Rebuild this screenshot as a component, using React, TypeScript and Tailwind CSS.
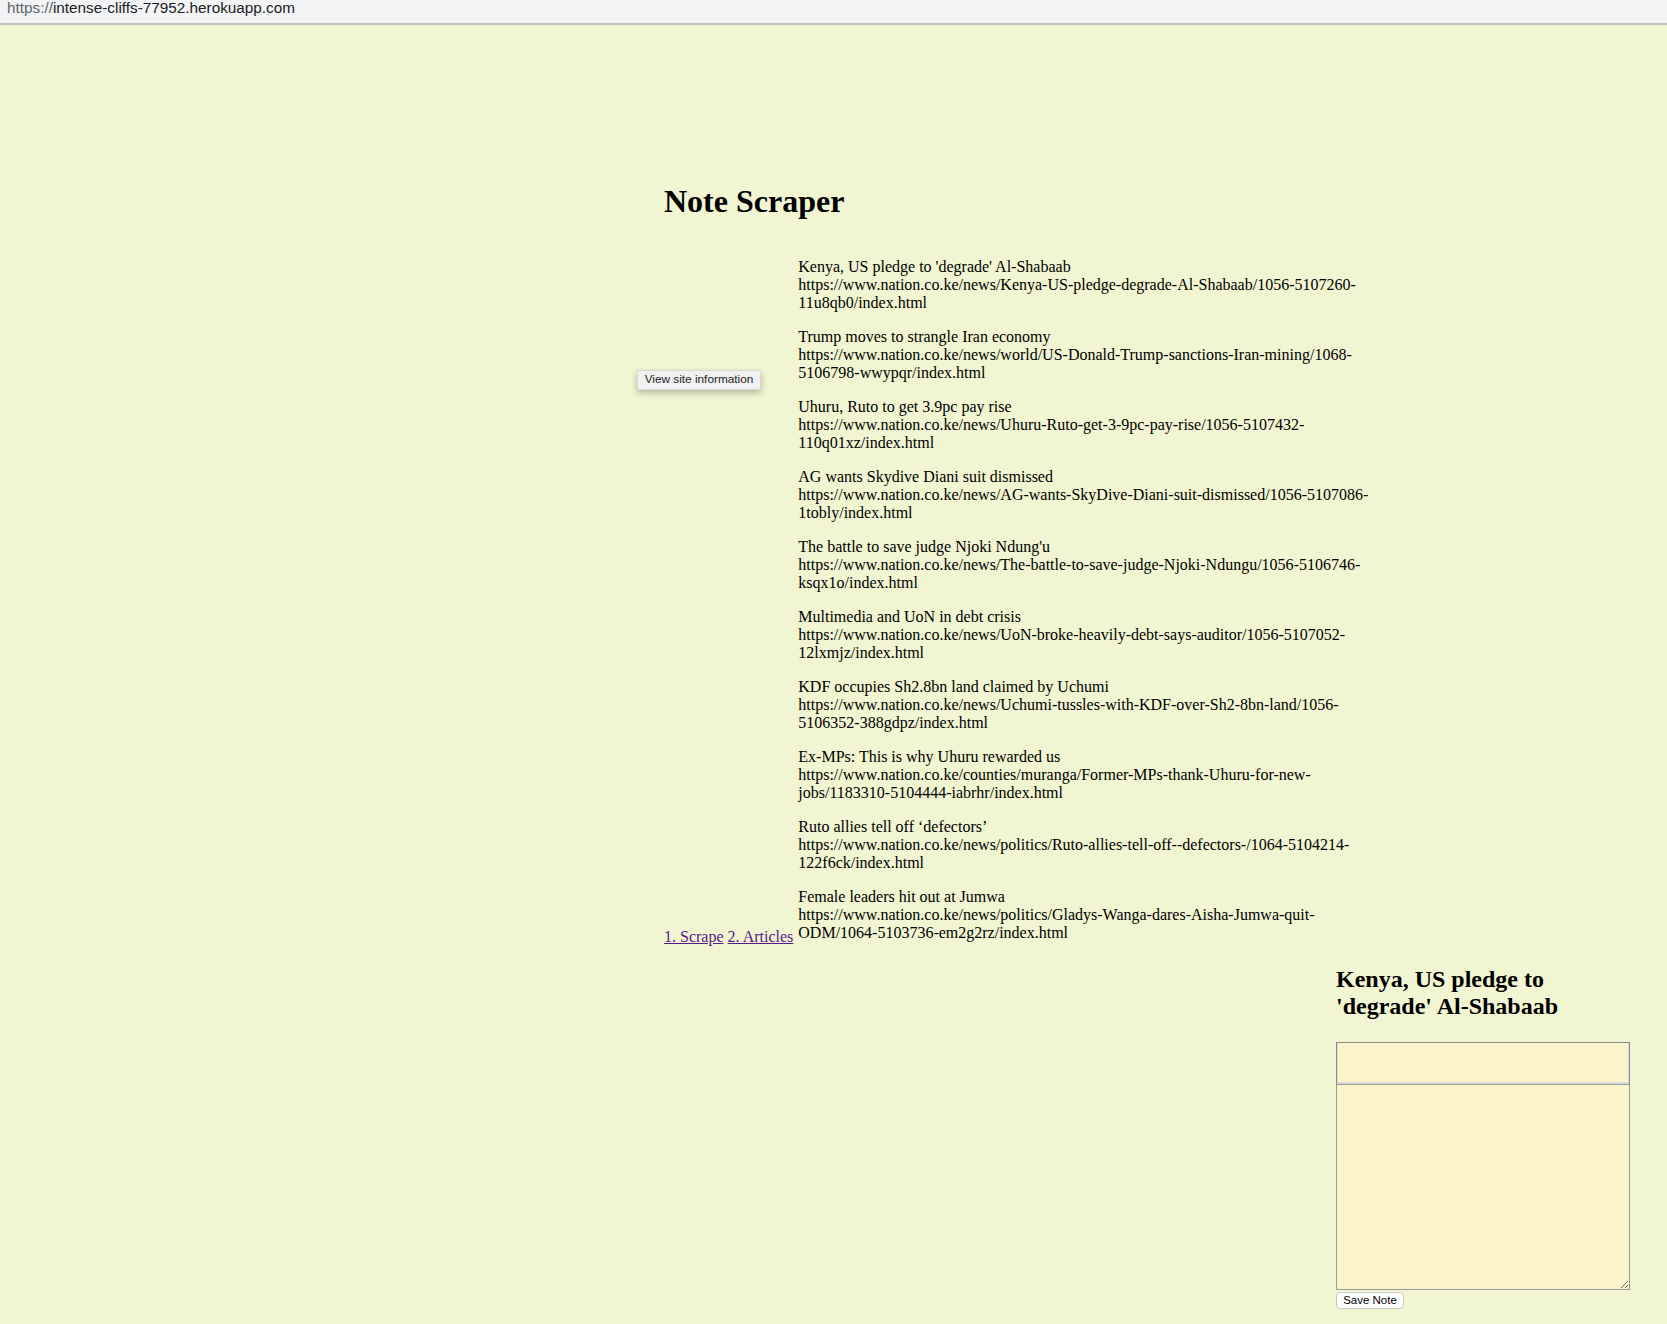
import React from 'react';

type Article = { title: string; url: string };

const articles: Article[] = [
  {
    title: "Kenya, US pledge to 'degrade' Al-Shabaab",
    url: 'https://www.nation.co.ke/news/Kenya-US-pledge-degrade-Al-Shabaab/1056-5107260-11u8qb0/index.html',
  },
  {
    title: 'Trump moves to strangle Iran economy',
    url: 'https://www.nation.co.ke/news/world/US-Donald-Trump-sanctions-Iran-mining/1068-5106798-wwypqr/index.html',
  },
  {
    title: 'Uhuru, Ruto to get 3.9pc pay rise',
    url: 'https://www.nation.co.ke/news/Uhuru-Ruto-get-3-9pc-pay-rise/1056-5107432-110q01xz/index.html',
  },
  {
    title: 'AG wants Skydive Diani suit dismissed',
    url: 'https://www.nation.co.ke/news/AG-wants-SkyDive-Diani-suit-dismissed/1056-5107086-1tobly/index.html',
  },
  {
    title: "The battle to save judge Njoki Ndung'u",
    url: 'https://www.nation.co.ke/news/The-battle-to-save-judge-Njoki-Ndungu/1056-5106746-ksqx1o/index.html',
  },
  {
    title: 'Multimedia and UoN in debt crisis',
    url: 'https://www.nation.co.ke/news/UoN-broke-heavily-debt-says-auditor/1056-5107052-12lxmjz/index.html',
  },
  {
    title: 'KDF occupies Sh2.8bn land claimed by Uchumi',
    url: 'https://www.nation.co.ke/news/Uchumi-tussles-with-KDF-over-Sh2-8bn-land/1056-5106352-388gdpz/index.html',
  },
  {
    title: 'Ex-MPs: This is why Uhuru rewarded us',
    url: 'https://www.nation.co.ke/counties/muranga/Former-MPs-thank-Uhuru-for-new-jobs/1183310-5104444-iabrhr/index.html',
  },
  {
    title: 'Ruto allies tell off \u2018defectors\u2019',
    url: 'https://www.nation.co.ke/news/politics/Ruto-allies-tell-off--defectors-/1064-5104214-122f6ck/index.html',
  },
  {
    title: 'Female leaders hit out at Jumwa',
    url: 'https://www.nation.co.ke/news/politics/Gladys-Wanga-dares-Aisha-Jumwa-quit-ODM/1064-5103736-em2g2rz/index.html',
  },
];

const App: React.FC = () => {
  return (
    <div className="relative min-h-screen bg-[#f2f5d2] text-black font-['Liberation_Serif','Times_New_Roman',serif]">
      {/* browser address strip */}
      <div className="h-[25px] bg-[#f1f3f4] border-b-2 border-[#bfbfbf] pl-[7px] font-['Liberation_Sans',Arial,sans-serif] text-[15.3px] leading-[15px]">
        <span className="text-[#5f6368]">https://</span>
        <span className="text-[#202124]">intense-cliffs-77952.herokuapp.com</span>
      </div>

      <div className="pl-[664px]">
        <h1 className="mt-[158px] text-[32px] font-bold leading-[37px]">Note Scraper</h1>

        <div className="mt-[38px] flex items-end gap-[5px]">
          <nav className="-mb-[4px] leading-[18px] text-[16px] whitespace-nowrap">
            <a href="#" className="text-[#551a8b] underline">
              1. Scrape
            </a>{' '}
            <a href="#" className="text-[#551a8b] underline">
              2. Articles
            </a>
          </nav>
          <div className="w-[580px] flex flex-col gap-4 text-[16px] leading-[18px]">
            {articles.map(a => (
              <div key={a.url}>
                <div>{a.title}</div>
                <div>{a.url}</div>
              </div>
            ))}
          </div>
        </div>
      </div>

      <div className="mt-[24px] flex justify-end pr-[37px]">
        <div className="w-[294px] flex flex-col items-start">
          <h2 className="text-[24px] font-bold leading-[27px]">Kenya, US pledge to 'degrade' Al-Shabaab</h2>
          <input
            type="text"
            className="mt-[22px] w-full h-[42px] bg-[#fbf4cb] border border-b-0 border-[#8b8b8b] shadow-[inset_1px_0_0_#d9d9d9,inset_-1px_0_0_#d9d9d9,inset_0_-2px_0_#d9d9d9] outline-none"
          />
          <textarea className="block w-full h-[206px] bg-[#fbf4cb] border border-[#999999] outline-none" />
          <button className="mt-[2px] w-[68px] h-[17px] bg-white border border-[#c9c9c9] rounded-[4px] font-['Liberation_Sans',Arial,sans-serif] text-[11.5px] leading-[15px] text-black">
            Save Note
          </button>
        </div>
      </div>

      {/* hover tooltip */}
      <div className="absolute left-[637px] top-[370px] h-[20px] w-[124px] flex items-center justify-center bg-[#f1f1f1] border border-[#d8d8d8] shadow-[0_3px_6px_rgba(0,0,0,0.25)] font-['Liberation_Sans',Arial,sans-serif] text-[11.8px] text-[#222]">
        View site information
      </div>
    </div>
  );
};

export default App;
